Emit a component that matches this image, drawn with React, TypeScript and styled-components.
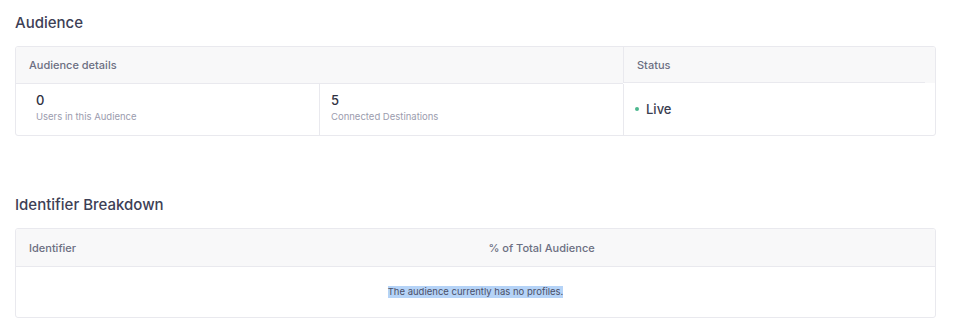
import styled, { createGlobalStyle } from 'styled-components'

const GlobalStyle = createGlobalStyle`
  body {
    margin: 0;
    background: #ffffff;
    font-family: Inter, 'Noto Sans', sans-serif;
    -webkit-font-smoothing: antialiased;
  }
`

const stats = [
  { value: '0', label: 'Users in this Audience', inset: 20 },
  { value: '5', label: 'Connected Destinations', inset: 11 },
]

export default function App() {
  return (
    <Page>
      <GlobalStyle />
      <Section>
        <Title>Audience</Title>
        <DetailsCard>
          <HeaderCell span={2}>Audience details</HeaderCell>
          <StatusHeader>Status</StatusHeader>
          {stats.map((stat) => (
            <StatCell key={stat.label} inset={stat.inset}>
              <StatValue>{stat.value}</StatValue>
              <StatLabel>{stat.label}</StatLabel>
            </StatCell>
          ))}
          <StatusCell>
            <Dot />
            Live
          </StatusCell>
        </DetailsCard>
      </Section>
      <Section>
        <Title>Identifier Breakdown</Title>
        <TableCard>
          <TableHead>
            <HeaderCell>Identifier</HeaderCell>
            <HeaderCell>% of Total Audience</HeaderCell>
          </TableHead>
          <EmptyRow>
            <Selected>The audience currently has no profiles.</Selected>
          </EmptyRow>
        </TableCard>
      </Section>
    </Page>
  )
}

const Page = styled.div`
  display: flex;
  flex-direction: column;
  gap: 59px;
  padding: 13px 20px 0 15px;
`

const Section = styled.section`
  display: flex;
  flex-direction: column;
  gap: 13px;
`

const Title = styled.h2`
  margin: 0;
  font-size: 15px;
  line-height: 20px;
  font-weight: 500;
  color: #3d4055;
`

const Card = styled.div`
  border: 1px solid #e9e9ee;
  border-radius: 3px;
  background: #ffffff;
  overflow: hidden;
`

const DetailsCard = styled(Card)`
  display: grid;
  grid-template-columns: 303px 304px 1fr;
`

const HeaderCell = styled.div<{ span?: number }>`
  grid-column: span ${(p) => p.span ?? 1};
  height: 36px;
  display: flex;
  align-items: center;
  padding: 0 13px;
  background: #f8f8f9;
  border-bottom: 1px solid #e9e9ee;
  font-size: 11px;
  font-weight: 500;
  color: #6c6f82;
`

const StatusHeader = styled(HeaderCell)`
  position: relative;
  border-bottom: none;
  border-left: 1px solid #e9e9ee;

  &::after {
    content: '';
    position: absolute;
    left: 0;
    right: 10px;
    bottom: 0;
    height: 1px;
    background: #e9e9ee;
  }
`

const StatCell = styled.div<{ inset: number }>`
  display: flex;
  flex-direction: column;
  gap: 2px;
  padding: 8px 12px 11px ${(p) => p.inset}px;

  & + & {
    border-left: 1px solid #e9e9ee;
  }
`

const StatValue = styled.div`
  font-size: 13px;
  line-height: 16px;
  font-weight: 500;
  color: #2f3142;
`

const StatLabel = styled.div`
  font-size: 9.5px;
  line-height: 14px;
  color: #9b9cae;
`

const StatusCell = styled.div`
  display: flex;
  align-items: center;
  gap: 7px;
  padding: 0 11px 2px;
  border-left: 1px solid #e9e9ee;
  font-size: 13px;
  font-weight: 500;
  color: #3a3d50;
`

const Dot = styled.span`
  width: 4px;
  height: 4px;
  border-radius: 50%;
  background: #4cb88e;
`

const TableCard = styled(Card)`
  display: flex;
  flex-direction: column;
`

const TableHead = styled.div`
  display: grid;
  grid-template-columns: 1fr 1fr;

  & > div {
    height: 37px;
  }
`

const EmptyRow = styled.div`
  height: 50px;
  display: flex;
  align-items: center;
  justify-content: center;
  font-size: 9.5px;
  color: #4b5068;
`

const Selected = styled.span`
  background: #b5d3f7;
  line-height: 12px;
`
